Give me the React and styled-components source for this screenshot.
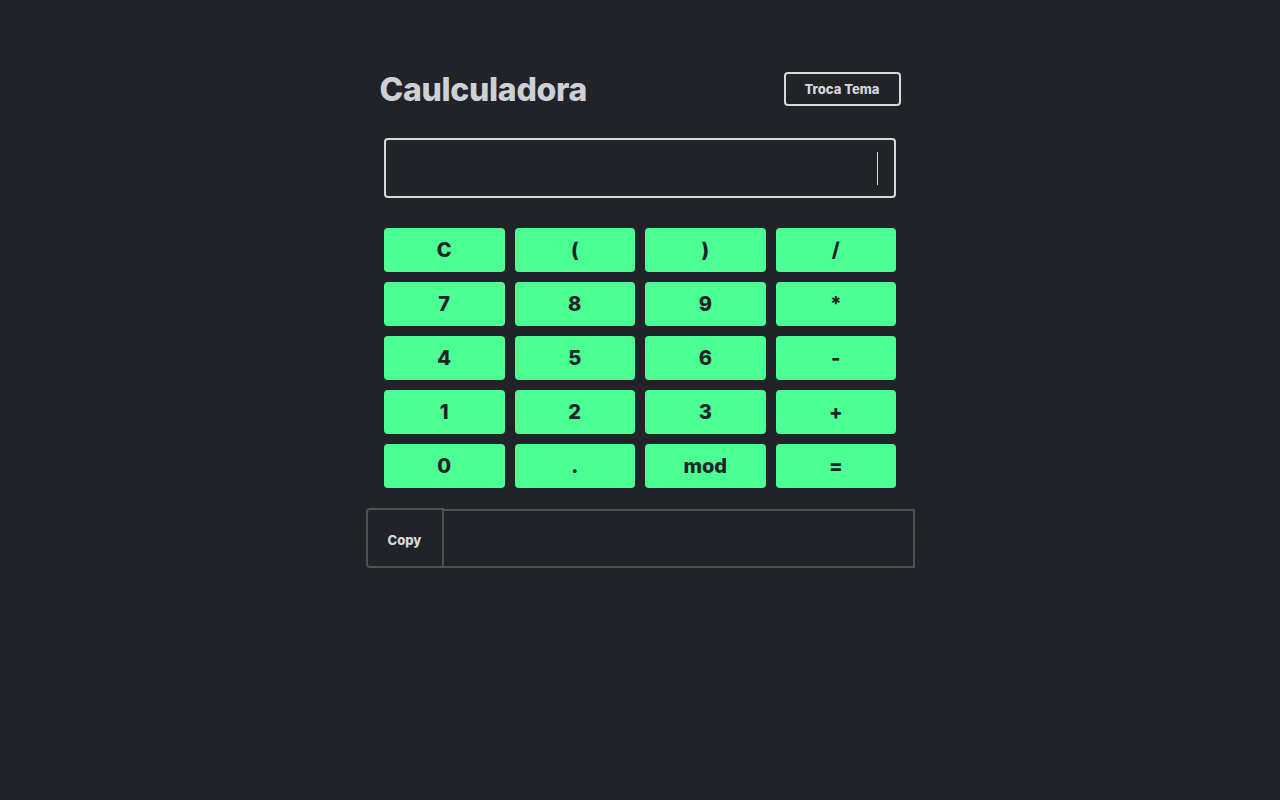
import React from 'react';
import styled, {createGlobalStyle} from 'styled-components';

const GlobalStyle = createGlobalStyle`
  html, body {
    margin: 0;
    padding: 0;
    background: #212328;
    font-family: Inter, "Noto Sans", sans-serif;
  }
`;

const keys = ['C', '(', ')', '/', '7', '8', '9', '*', '4', '5', '6', '-', '1', '2', '3', '+', '0', '.', 'mod', '='];

const Page = styled.div`
  min-height: 800px;
  display: flex;
  flex-direction: column;
  align-items: center;
  padding-top: 72px;
  box-sizing: border-box;
`;

const Header = styled.header`
  width: 521px;
  height: 34px;
  display: flex;
  justify-content: space-between;
  align-items: center;
`;

const Title = styled.h1`
  margin: 0;
  font-size: 32px;
  font-weight: 800;
  color: #cdd0d4;
  letter-spacing: -0.3px;
`;

const ThemeButton = styled.button`
  width: 117px;
  height: 34px;
  background: transparent;
  border: 2px solid #d6d8db;
  border-radius: 4px;
  color: #d6d8db;
  font-family: inherit;
  font-size: 13px;
  font-weight: 800;
`;

const Display = styled.div`
  margin-top: 32px;
  width: 512px;
  height: 60px;
  box-sizing: border-box;
  border: 2px solid #d6d8db;
  border-radius: 4px;
  display: flex;
  justify-content: flex-end;
  align-items: center;
  padding-right: 16px;
`;

const Caret = styled.span`
  width: 1px;
  height: 33px;
  background: #d6d8db;
`;

const Keypad = styled.div`
  margin-top: 30px;
  width: 512px;
  display: grid;
  grid-template-columns: repeat(4, 1fr);
  gap: 10px;
`;

const Key = styled.button`
  height: 44px;
  border: none;
  border-radius: 4px;
  background: #4cff95;
  color: #212328;
  font-family: inherit;
  font-size: 20px;
  font-weight: 800;
`;

const CopyRow = styled.div`
  margin-top: 20px;
  width: 549px;
  height: 60px;
  display: flex;
`;

const CopyButton = styled.button`
  width: 78px;
  height: 60px;
  padding-top: 4px;
  background: transparent;
  border: 2px solid #4e5054;
  border-radius: 4px 0 0 4px;
  color: #d6d8db;
  font-family: inherit;
  font-size: 13px;
  font-weight: 800;
`;

const Result = styled.div`
  flex: 1;
  height: 59px;
  box-sizing: border-box;
  border: 2px solid #4e5054;
  border-left: none;
  margin-top: 1px;
`;

export default function App() {
  return (
    <Page>
      <GlobalStyle />
      <Header>
        <Title>Caulculadora</Title>
        <ThemeButton>Troca Tema</ThemeButton>
      </Header>
      <Display>
        <Caret />
      </Display>
      <Keypad>
        {keys.map(k => (
          <Key key={k}>{k}</Key>
        ))}
      </Keypad>
      <CopyRow>
        <CopyButton>Copy</CopyButton>
        <Result />
      </CopyRow>
    </Page>
  );
}
